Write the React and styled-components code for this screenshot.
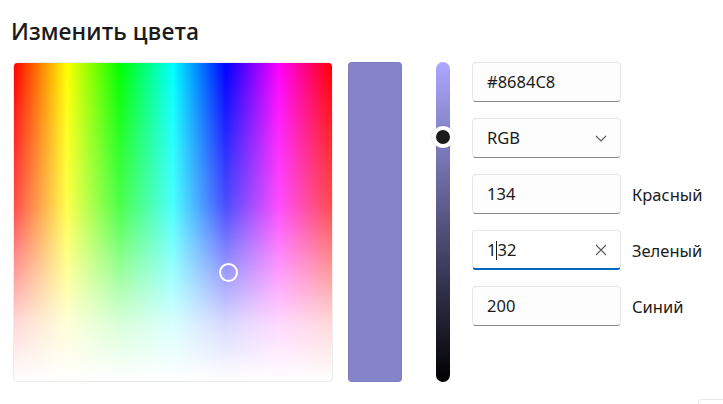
import React from 'react'
import styled, { createGlobalStyle } from 'styled-components'

const GlobalStyle = createGlobalStyle`
    body {
        margin: 0;
        background: #ffffff;
        font-family: "Noto Sans", "Open Sans", sans-serif;
        color: #1b1b1b;
    }
`

const Page = styled.div`
    width: 723px;
    height: 404px;
    padding: 0 0 0 13px;
    box-sizing: border-box;
    overflow: hidden;
`

const Title = styled.h2`
    margin: 0 0 0 -2px;
    padding: 17px 0 0 0;
    height: 62px;
    box-sizing: border-box;
    font-family: "Open Sans", "Noto Sans", sans-serif;
    font-size: 22.5px;
    font-weight: 600;
    line-height: 30px;
    letter-spacing: 0.1px;
`

const Row = styled.div`
    display: flex;
    align-items: flex-start;
`

const Spectrum = styled.div`
    position: relative;
    width: 320px;
    height: 320px;
    border-radius: 4px;
    box-sizing: border-box;
    border: 1px solid #ececec;
    background:
        linear-gradient(to bottom, rgba(255,255,255,0) 0%, rgba(255,255,255,0.3) 45%, rgba(255,255,255,0.85) 82%, #ffffff 100%),
        linear-gradient(to right, #ff0000 0%, #ffff00 16.6%, #00ff00 33.3%, #00ffff 50%, #0000ff 66.6%, #ff00ff 83.3%, #ff0000 100%);
`

const Picker = styled.div`
    position: absolute;
    left: 205px;
    top: 200px;
    width: 19px;
    height: 19px;
    box-sizing: border-box;
    border: 2px solid #ffffff;
    border-radius: 50%;
`

const Swatch = styled.div`
    width: 54px;
    height: 320px;
    margin-left: 15px;
    border-radius: 4px;
    background: ${p => p.color};
    box-shadow: inset 0 0 0 1px rgba(0,0,0,0.05);
`

const Slider = styled.div`
    position: relative;
    width: 14px;
    height: 320px;
    margin-left: 34px;
    border-radius: 7px;
    background: linear-gradient(to bottom, #aba8ff 0%, #000000 100%);
`

const Thumb = styled.div`
    position: absolute;
    left: -4px;
    top: 64px;
    width: 22px;
    height: 22px;
    box-sizing: border-box;
    border-radius: 50%;
    background: #1b1b1b;
    border: 4.5px solid #ffffff;
    box-shadow: 0 0 0 1px rgba(0,0,0,0.06);
`

const Fields = styled.div`
    display: grid;
    grid-template-columns: 149px auto;
    column-gap: 11px;
    row-gap: 16px;
    margin-left: 22px;
    align-items: center;
`

const Box = styled.div`
    grid-column: 1;
    position: relative;
    height: 40px;
    box-sizing: border-box;
    display: flex;
    align-items: center;
    padding: 0 13px 0 14px;
    border-radius: 4px;
    border: 1px solid #e6e6e6;
    border-bottom: ${p => p.focused ? '2px solid #0067c0' : '1px solid #8a8a8a'};
    background: ${p => p.focused ? '#ffffff' : '#fdfdfd'};
    font-size: 16.5px;
    color: #1b1b1b;
`

const Value = styled.span`
    flex: 1;
    line-height: 20px;
    padding-top: ${p => p.focused ? '1px' : '0'};
`

const Caret = styled.span`
    display: inline-block;
    width: 1px;
    height: 19px;
    background: #1b1b1b;
    vertical-align: -4px;
`

const Label = styled.span`
    grid-column: 2;
    font-size: 16.5px;
    color: #1b1b1b;
    white-space: nowrap;
`

const Icon = styled.svg`
    display: block;
    flex: none;
`

const Chevron = () => (
    <Icon width="12" height="7" viewBox="0 0 12 7">
        <path d="M1 1 L6 6 L11 1" fill="none" stroke="#5c5c5c" strokeWidth="1.2" />
    </Icon>
)

const Close = () => (
    <Icon width="12" height="12" viewBox="0 0 12 12">
        <path d="M1 1 L11 11 M11 1 L1 11" fill="none" stroke="#5c5c5c" strokeWidth="1.1" />
    </Icon>
)

const Corner = styled.div`
    position: absolute;
    left: 698px;
    top: 399px;
    width: 40px;
    height: 20px;
    border: 1px solid #e8e8e8;
    border-radius: 4px;
`

const App = () => {
    return (
        <Page>
            <GlobalStyle />
            <Title>Изменить цвета</Title>
            <Row>
                <Spectrum>
                    <Picker />
                </Spectrum>
                <Swatch color="#8684c8" />
                <Slider>
                    <Thumb />
                </Slider>
                <Fields>
                    <Box><Value>#8684C8</Value></Box>
                    <Box><Value>RGB</Value><Chevron /></Box>
                    <Box><Value>134</Value></Box>
                    <Label>Красный</Label>
                    <Box focused><Value focused>1<Caret />32</Value><Close /></Box>
                    <Label>Зеленый</Label>
                    <Box><Value>200</Value></Box>
                    <Label>Синий</Label>
                </Fields>
            </Row>
            <Corner />
        </Page>
    )
}

export default App
